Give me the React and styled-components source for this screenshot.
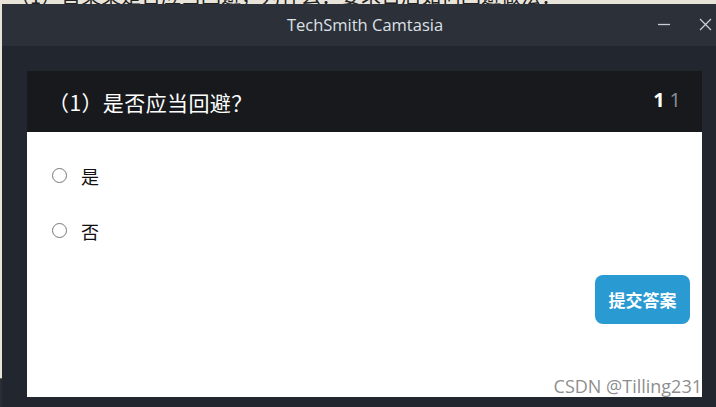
import React from "react";
import styled, { createGlobalStyle } from "styled-components";

const GlobalStyle = createGlobalStyle`
  html, body {
    margin: 0;
    padding: 0;
    background: #e9e4da;
  }
  body {
    font-family: "Noto Sans CJK SC", "Noto Sans", sans-serif;
  }
`;

const Page = styled.div`
  width: 716px;
  height: 407px;
  display: flex;
  flex-direction: column;
  overflow: hidden;
`;

const TopStrip = styled.div`
  height: 4px;
  overflow: hidden;
  position: relative;
  flex-shrink: 0;
`;

const BehindText = styled.div`
  position: absolute;
  left: 0;
  bottom: -4px;
  font-family: "Noto Sans CJK SC", sans-serif;
  font-size: 20px;
  line-height: 24px;
  color: #222;
  white-space: nowrap;
`;

const Row = styled.div`
  flex: 1;
  display: flex;
`;

const LeftStrip = styled.div`
  width: 2px;
  background: linear-gradient(#e9e4da 0 374px, #6b6b6b 374px 375px, #2a2d33 375px);
`;

const Window = styled.div`
  flex: 1;
  display: flex;
  flex-direction: column;
  background: #22262e;
`;

const TitleBar = styled.div`
  height: 42px;
  flex-shrink: 0;
  background: #2b3039;
  position: relative;
  display: flex;
  align-items: center;
  justify-content: center;
`;

const Title = styled.span`
  font-family: "Open Sans", sans-serif;
  font-size: 16.5px;
  color: #dde0e5;
  margin-left: 12px;
  margin-top: -2px;
`;

const Controls = styled.div`
  position: absolute;
  right: 4px;
  top: 14px;
  display: flex;
  gap: 28px;
  align-items: center;
`;

const Body = styled.div`
  flex: 1;
  display: flex;
  padding: 25px 14px 10px 25px;
`;

const Panel = styled.div`
  flex: 1;
  display: flex;
  flex-direction: column;
`;

const Header = styled.div`
  height: 61px;
  flex-shrink: 0;
  background: #17191c;
  display: flex;
  align-items: center;
  justify-content: space-between;
  padding: 0 21px 0 21px;
`;

const Question = styled.div`
  font-size: 21px;
  color: #ffffff;
  letter-spacing: 0.4px;
`;

const Counter = styled.div`
  font-family: "Open Sans", sans-serif;
  font-size: 20px;
  display: flex;
  gap: 5px;
  margin-top: -4px;
`;

const Num = styled.span`
  color: ${(p) => (p.$muted ? "#8b9098" : "#ffffff")};
  font-weight: ${(p) => (p.$muted ? 400 : 700)};
`;

const Content = styled.div`
  flex: 1;
  background: #ffffff;
  position: relative;
  display: flex;
  flex-direction: column;
  padding: 16px 12px 0 25px;
`;

const Option = styled.label`
  height: 55px;
  display: flex;
  align-items: center;
  gap: 14px;
  font-size: 18px;
  color: #111;
`;

const Radio = styled.span`
  width: 13px;
  height: 13px;
  border-radius: 50%;
  border: 1.5px solid #777;
  display: inline-block;
`;

const Actions = styled.div`
  display: flex;
  justify-content: flex-end;
  margin-top: 17px;
`;

const Submit = styled.button`
  width: 95px;
  height: 49px;
  border: none;
  border-radius: 8px;
  background: #2a9ad3;
  color: #ffffff;
  font-family: "Noto Sans CJK SC", sans-serif;
  font-weight: 700;
  font-size: 17px;
  padding: 0;
`;

const Watermark = styled.div`
  position: absolute;
  right: 0;
  bottom: -1px;
  font-family: "Open Sans", sans-serif;
  font-size: 18px;
  color: rgba(110, 110, 110, 0.8);
  white-space: nowrap;
`;

export default function App() {
  return (
    <Page>
      <GlobalStyle />
      <TopStrip>
        <BehindText>·（1）首某某是否应当回避，为什么：要求日后如何回避做法：</BehindText>
      </TopStrip>
      <Row>
        <LeftStrip />
        <Window>
          <TitleBar>
            <Title>TechSmith Camtasia</Title>
            <Controls>
              <svg width="13" height="13" viewBox="0 0 13 13">
                <path d="M0 6.5h12" stroke="#c9cdd3" strokeWidth="1.3" />
              </svg>
              <svg width="13" height="13" viewBox="0 0 13 13">
                <path d="M1 1l11 11M12 1L1 12" stroke="#c9cdd3" strokeWidth="1.3" />
              </svg>
            </Controls>
          </TitleBar>
          <Body>
            <Panel>
              <Header>
                <Question>（1）是否应当回避？</Question>
                <Counter>
                  <Num>1</Num>
                  <Num $muted>1</Num>
                </Counter>
              </Header>
              <Content>
                <Option>
                  <Radio />
                  是
                </Option>
                <Option>
                  <Radio />
                  否
                </Option>
                <Actions>
                  <Submit>提交答案</Submit>
                </Actions>
                <Watermark>CSDN @Tilling231</Watermark>
              </Content>
            </Panel>
          </Body>
        </Window>
      </Row>
    </Page>
  );
}
